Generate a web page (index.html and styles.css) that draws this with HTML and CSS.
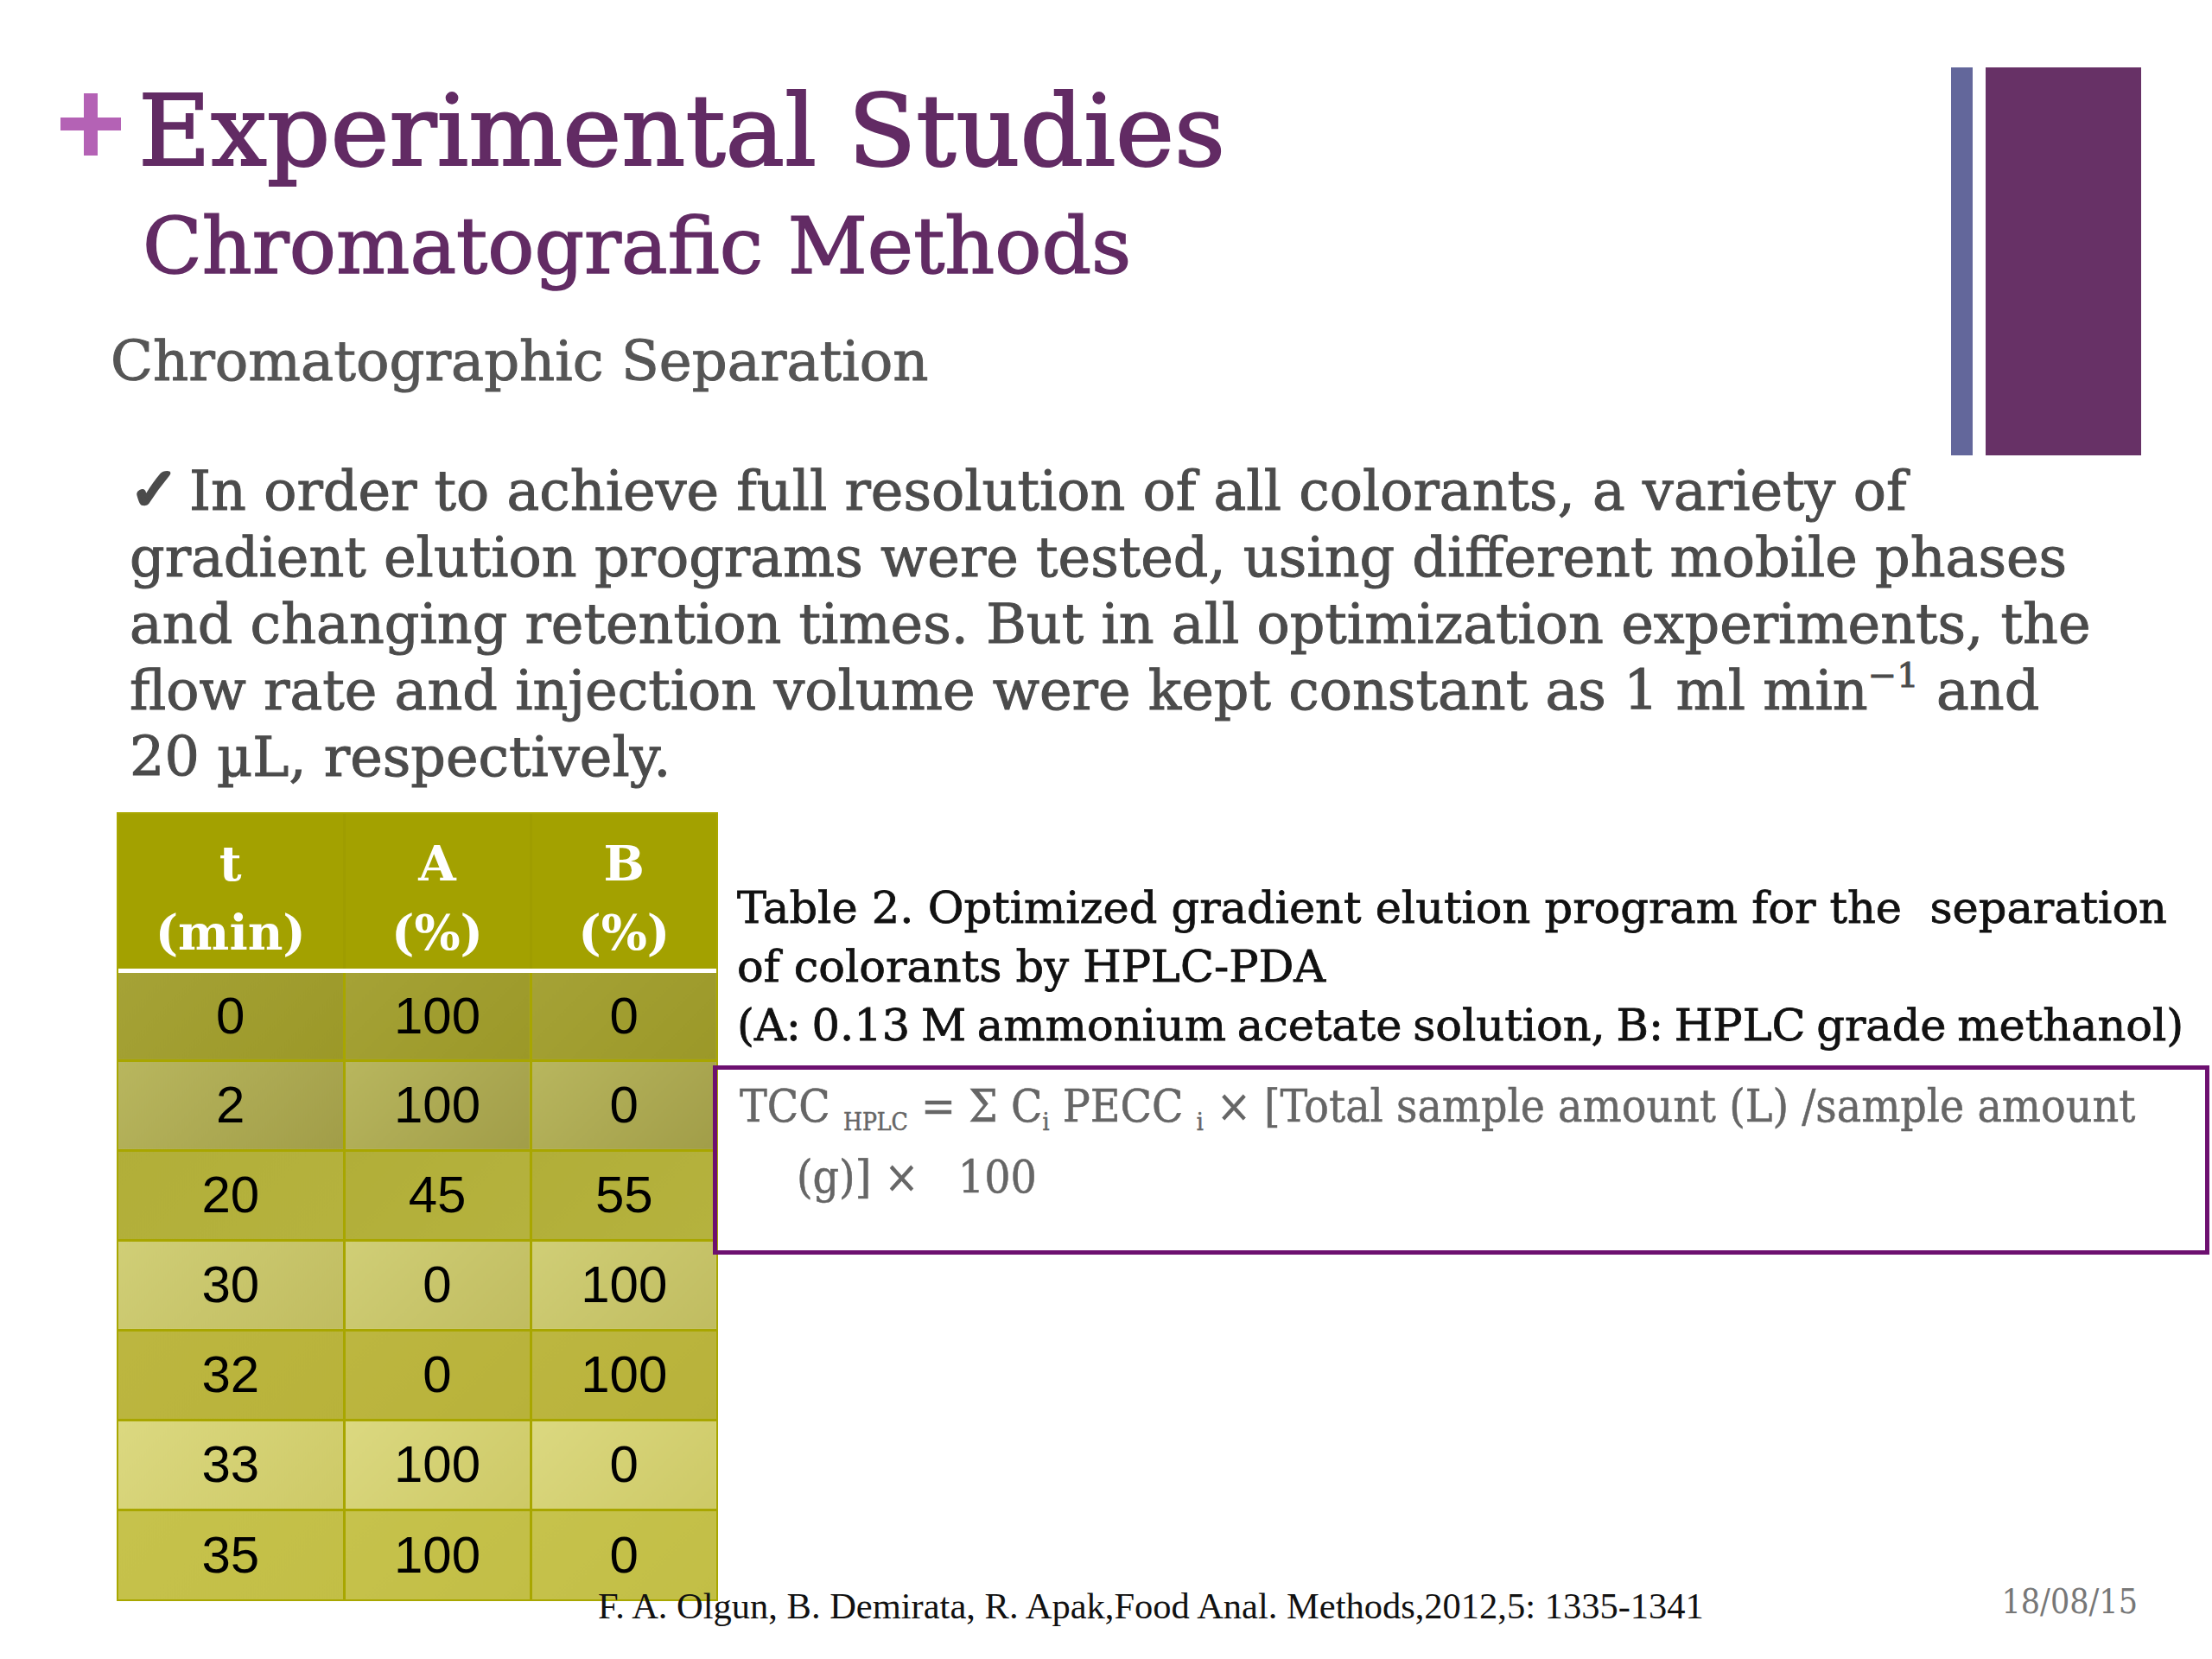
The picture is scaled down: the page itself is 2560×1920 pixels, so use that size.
FILE: index.html
```html
<!DOCTYPE html>
<html lang="en">
<head>
<meta charset="utf-8">
<title>Experimental Studies</title>
<link rel="stylesheet" href="styles.css">
</head>
<body>
<div class="slide">
  <header class="top">
    <div class="titles">
      <div class="title-row">
        <svg class="plus" viewBox="0 0 70 72" width="70" height="72" aria-hidden="true">
          <rect x="0" y="28" width="70" height="15" fill="#b462b5"/>
          <rect x="27" y="0" width="16" height="72" fill="#b462b5"/>
        </svg>
        <h1 class="title">Experimental Studies</h1>
      </div>
      <h2 class="subtitle">Chromatografic Methods</h2>
      <h3 class="section">Chromatographic Separation</h3>
    </div>
    <div class="deco">
      <div class="bar-thin"></div>
      <div class="bar-wide"></div>
    </div>
  </header>

  <p class="bullet"><span class="check">✓</span>In order to achieve full resolution of all colorants, a variety of<br>gradient elution programs were tested, using different mobile phases<br>and changing retention times. But in all optimization experiments, the<br>flow rate and injection volume were kept constant as 1 ml min<sup class="sup">−1</sup> and<br>20 µL, respectively.</p>

  <section class="content">
    <table class="grad">
      <thead>
        <tr><th class="c1">t<br>(min)</th><th class="c2">A<br>(%)</th><th class="c3">B<br>(%)</th></tr>
      </thead>
      <tbody>
        <tr class="r1"><td>0</td><td>100</td><td>0</td></tr>
        <tr class="r2"><td>2</td><td>100</td><td>0</td></tr>
        <tr class="r3"><td>20</td><td>45</td><td>55</td></tr>
        <tr class="r4"><td>30</td><td>0</td><td>100</td></tr>
        <tr class="r5"><td>32</td><td>0</td><td>100</td></tr>
        <tr class="r6"><td>33</td><td>100</td><td>0</td></tr>
        <tr class="r7"><td>35</td><td>100</td><td>0</td></tr>
      </tbody>
    </table>
    <div class="side">
      <p class="caption">Table 2. Optimized gradient elution program for the&nbsp; separation<br>of colorants by HPLC-PDA<br><span class="tight">(A: 0.13 M ammonium acetate solution, B: HPLC grade methanol)</span></p>
      <div class="formula">
        <p class="f-line">TCC <sub class="sub">HPLC</sub> = Σ C<sub class="sub">i</sub> PECC <sub class="sub">i</sub> × [Total sample amount (L) /sample amount</p>
        <p class="f-line f-indent">(g)] ×&nbsp;&nbsp; 100</p>
      </div>
    </div>
  </section>

  <footer class="foot">
    <span class="cite">F. A. Olgun, B. Demirata, R. Apak,Food Anal. Methods,2012,5: 1335-1341</span>
    <span class="date">18/08/15</span>
  </footer>
</div>
</body>
</html>
```

FILE: styles.css
```css
html, body {
  margin: 0;
  padding: 0;
  background: #ffffff;
}

.slide {
  width: 2560px;
  height: 1920px;
  background: #ffffff;
  font-family: "DejaVu Serif", "Liberation Serif", serif;
  overflow: hidden;
}

/* ---------- header ---------- */
.top {
  display: flex;
  justify-content: space-between;
  align-items: flex-start;
  height: 527px;
}

.titles {
  padding-top: 94px;
  padding-left: 70px;
}

.title-row {
  display: flex;
  align-items: flex-start;
  gap: 20px;
}

.plus {
  display: block;
  margin-top: 14px;
  flex: none;
}

.title {
  margin: 0;
  font-size: 115px;
  line-height: 114px;
  font-weight: normal;
  color: #622b64;
  -webkit-text-stroke: 2px #622b64;
  white-space: nowrap;
}

.subtitle {
  margin: 31px 0 0 95px;
  font-size: 90px;
  line-height: 92px;
  font-weight: normal;
  color: #622b64;
  -webkit-text-stroke: 1.5px #622b64;
  white-space: nowrap;
}

.section {
  margin: 55px 0 0 58px;
  font-size: 64px;
  line-height: 64px;
  font-weight: normal;
  color: #555555;
  -webkit-text-stroke: 1px #555555;
  white-space: nowrap;
}

.deco {
  display: flex;
  gap: 15px;
  margin-top: 78px;
  margin-right: 82px;
  height: 449px;
}

.bar-thin {
  width: 25px;
  background: #63679b;
}

.bar-wide {
  width: 180px;
  background: #673166;
}

/* ---------- bullet paragraph ---------- */
.bullet {
  margin: 3px 0 0 150px;
  font-size: 63.5px;
  line-height: 77px;
  color: #4b4b4b;
  -webkit-text-stroke: 1px #4b4b4b;
  white-space: nowrap;
}

.check {
  font-family: "DejaVu Sans", sans-serif;
  font-size: 68px;
  line-height: 0;
  margin-right: 12px;
  -webkit-text-stroke: 4px #4b4b4b;
}

.sup {
  font-size: 40px;
  line-height: 0;
  vertical-align: 26px;
}

/* ---------- table + side ---------- */
.content {
  display: flex;
  align-items: flex-start;
  margin-top: 27px;
  padding-left: 137px;
}

.grad {
  border-collapse: collapse;
  flex: none;
  font-family: "Liberation Sans", Arial, sans-serif;
  background: #a6a400;
  outline: 2px solid #a9a700;
}

.grad th {
  height: 181px;
  padding: 17px 0 0;
  box-sizing: border-box;
  vertical-align: top;
  font-family: "DejaVu Serif", serif;
  font-weight: bold;
  font-size: 56px;
  line-height: 80px;
  color: #ffffff;
  background: #a3a100;
  border-bottom: 5px solid #ffffff;
}

.grad th.c1, .grad td:nth-child(1) { width: 261px; }
.grad th.c2, .grad td:nth-child(2) { width: 216px; }
.grad th.c3, .grad td:nth-child(3) { width: 215px; }

.grad th + th { border-left: 3px solid #9f9d00; }

.grad td {
  height: 104px;
  padding: 0;
  box-sizing: border-box;
  text-align: center;
  vertical-align: middle;
  font-size: 60px;
  line-height: 60px;
  color: #000000;
  border: 3px solid #a8a600;
}

.grad tr:first-child td { border-top: 0; }
.grad td:first-child { border-left: 0; }
.grad td:last-child { border-right: 0; }
.grad tr:last-child td { border-bottom: 0; }

.r1 td { background: linear-gradient(135deg, #a5a236, #9b9828); }
.r2 td { background: linear-gradient(135deg, #b8b65e, #a19d48); }
.r3 td { background: linear-gradient(135deg, #b1ae38, #b5b23e); }
.r4 td { background: linear-gradient(135deg, #d0ce76, #c0bc60); }
.r5 td { background: linear-gradient(135deg, #bcb640, #b8b23a); }
.r6 td { background: linear-gradient(135deg, #dbd880, #cdc966); }
.r7 td { background: linear-gradient(135deg, #c6c24c, #c2be46); }

.side {
  flex: 1;
  margin-left: -4px;
  margin-right: 3px;
}

.caption {
  margin: 75px 0 0 28px;
  font-size: 51px;
  line-height: 68px;
  color: #111111;
  -webkit-text-stroke: 0.8px #111111;
  white-space: nowrap;
}

.tight {
  word-spacing: -3.5px;
}

.formula {
  margin-top: 12px;
  height: 219px;
  box-sizing: border-box;
  border: 5px solid #6d1070;
  padding: 1px 0 0 26px;
  color: #666666;
  font-stretch: condensed;
}

.f-line {
  margin: 0;
  font-size: 53px;
  line-height: 82px;
  -webkit-text-stroke: 0.5px #666666;
  white-space: nowrap;
}

.f-indent {
  padding-left: 66px;
}

.sub {
  font-size: 28px;
  line-height: 0;
  vertical-align: -10px;
}

/* ---------- footer ---------- */
.foot {
  display: flex;
  align-items: flex-start;
  margin-top: -13px;
  padding-left: 692px;
  padding-right: 86px;
}

.cite {
  font-family: "Liberation Serif", "Times New Roman", serif;
  font-size: 42.5px;
  line-height: 42px;
  color: #111111;
  white-space: nowrap;
}

.date {
  margin-left: auto;
  margin-top: -4px;
  font-size: 39px;
  line-height: 39px;
  font-stretch: condensed;
  color: #777777;
}
```
